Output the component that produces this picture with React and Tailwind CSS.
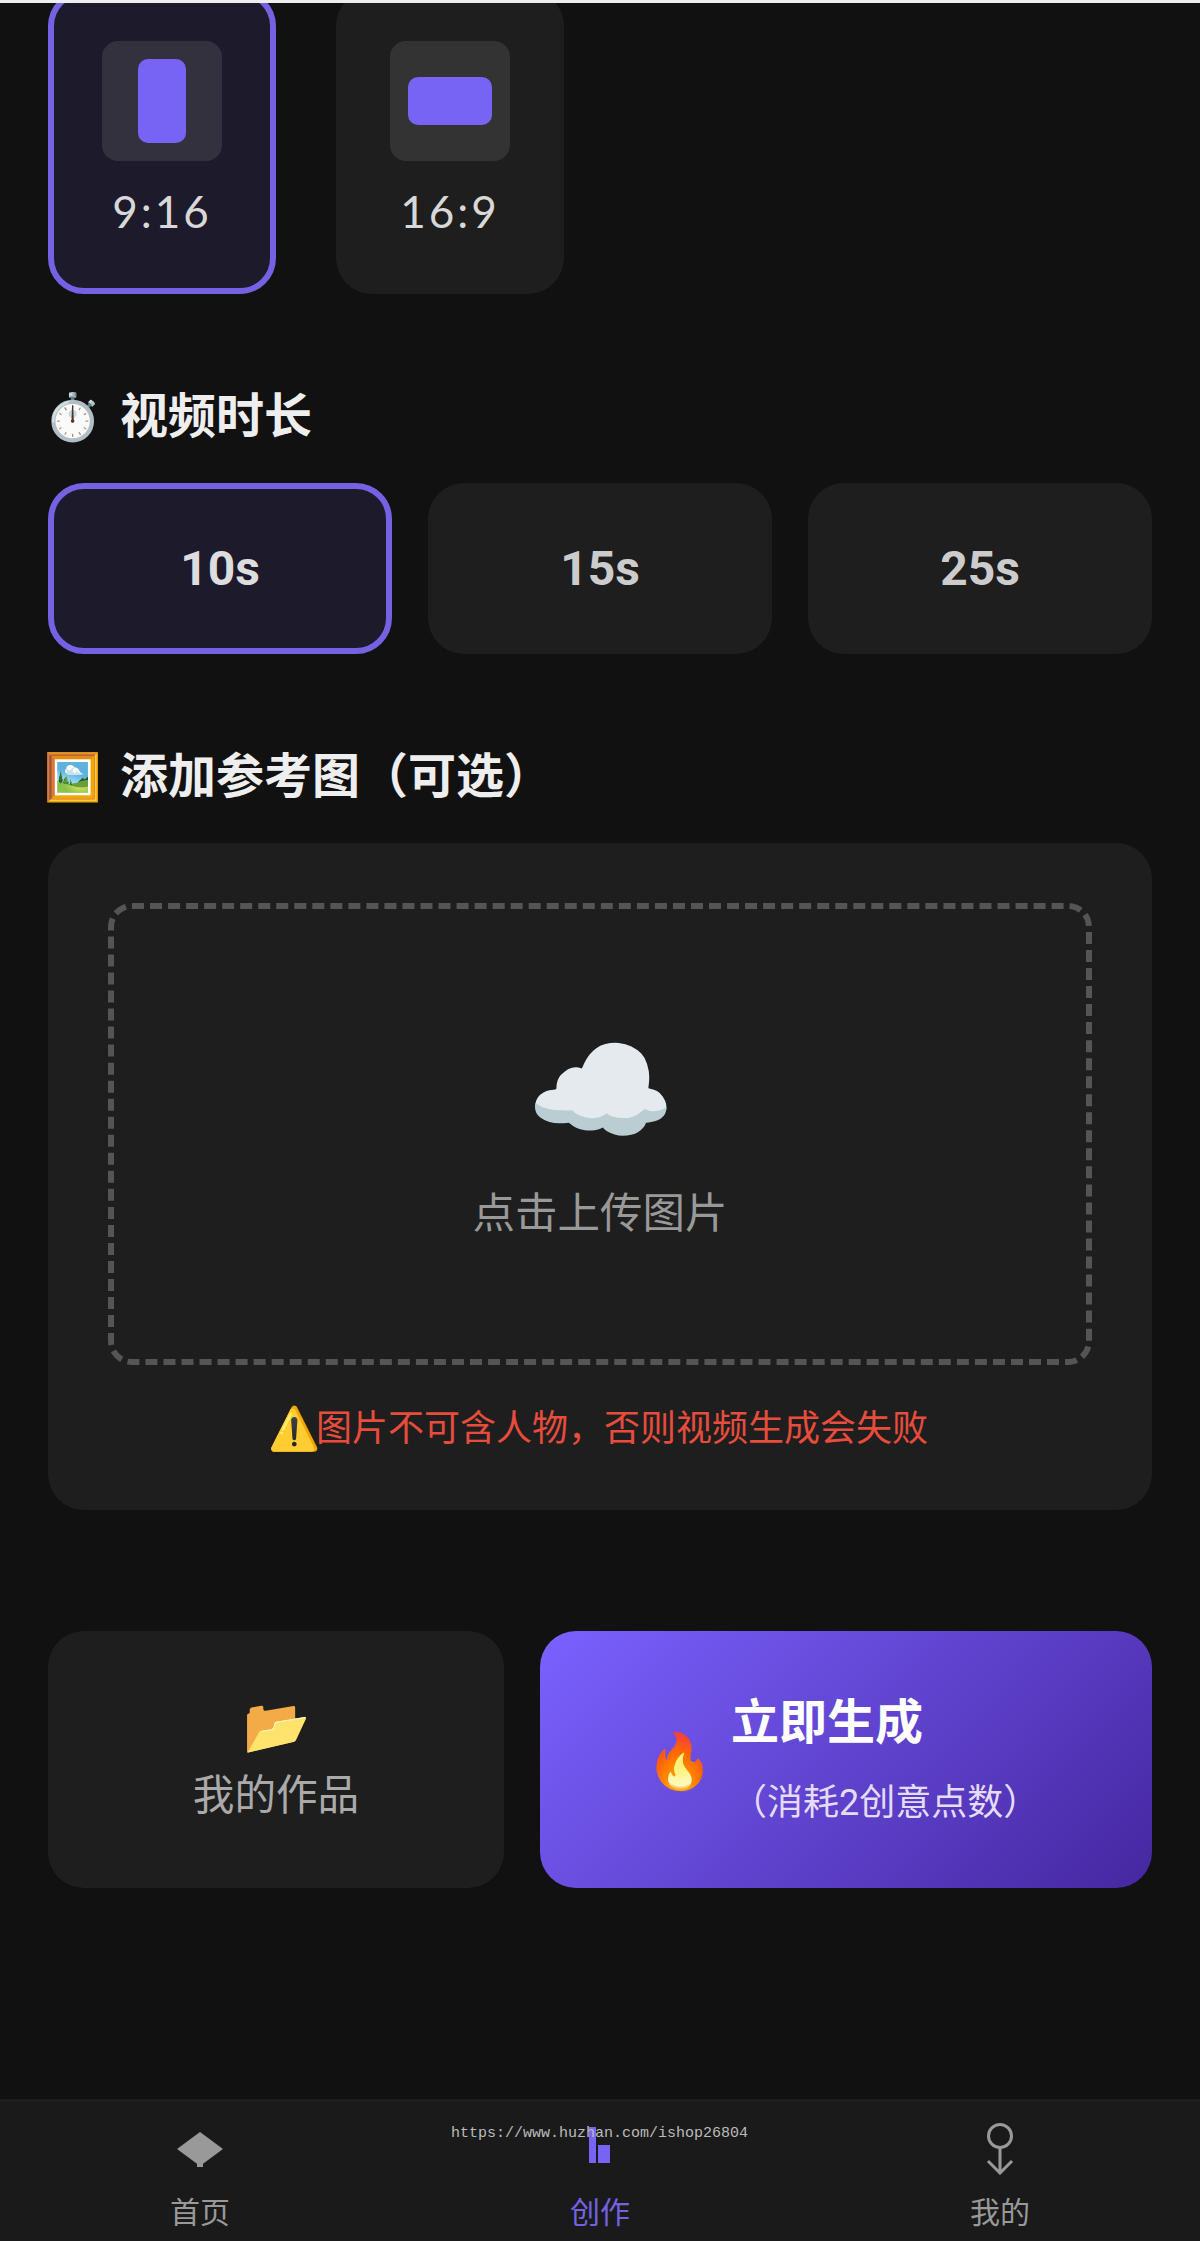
import React from 'react';

const FONT = 'font-["Roboto","Noto_Sans_CJK_SC",sans-serif]';

const RatioCard = ({ label, active, portrait }) => (
  <div
    className={`w-[228px] h-[304px] rounded-[36px] flex flex-col items-center ${
      active ? 'bg-[#1c1a2b] border-[6px] border-[#7562e2] pt-[45px]' : 'bg-[#1e1e1e] pt-[51px]'
    }`}
  >
    <div className={`w-[120px] h-[120px] rounded-[16px] flex items-center justify-center ${active ? 'bg-[#33313e]' : 'bg-[#333333]'}`}>
      <div className={`bg-[#7864f4] rounded-[10px] ${portrait ? 'w-[48px] h-[84px]' : 'w-[84px] h-[48px]'}`} />
    </div>
    <div className='mt-[20px] text-[44px] leading-[60px] tracking-[3px] text-[#d8d8d8] font-["Lato"] font-normal'>{label}</div>
  </div>
);

const DurationCard = ({ label, active }) => (
  <div
    className={`h-[171px] rounded-[36px] flex items-center justify-center text-[48px] font-bold ${
      active ? 'bg-[#1c1a2b] border-[6px] border-[#7562e2] text-[#dddddd]' : 'bg-[#1e1e1e] text-[#cccccc]'
    }`}
  >
    {label}
  </div>
);

const Title = ({ emoji, text }) => (
  <div className="flex items-center h-[70px] text-[48px] font-bold text-[#eeeeee]">
    <span className="-ml-[4px] w-[76px] text-[46px]">{emoji}</span>
    {text}
  </div>
);

const TabLabel = ({ children, active }) => (
  <div className={`text-[30px] leading-[40px] ${active ? 'text-[#7562e2]' : 'text-[#999999]'}`}>{children}</div>
);

export default function App() {
  return (
    <div className={`relative h-[2241px] overflow-hidden bg-[#111111] flex flex-col ${FONT}`}>
      <div className="h-[3px] bg-[#eeeeee] shrink-0 relative z-10" />
      <div className="flex-1 px-[48px] -mt-[13px]">
        <div className="flex gap-[60px]">
          <RatioCard label="9:16" active portrait />
          <RatioCard label="16:9" />
        </div>

        <div className="mt-[88px]">
          <Title emoji="⏱️" text="视频时长" />
        </div>
        <div className="grid grid-cols-3 gap-[36px] mt-[31px]">
          <DurationCard label="10s" active />
          <DurationCard label="15s" />
          <DurationCard label="25s" />
        </div>

        <div className="mt-[88px]">
          <Title emoji="🖼️" text="添加参考图（可选）" />
        </div>
        <div className="mt-[31px] h-[667px] rounded-[36px] bg-[#1e1e1e] px-[60px] pt-[60px]">
          <div className="h-[462px] rounded-[24px] border-[6px] border-dashed border-[#555555] flex flex-col items-center">
            <div className="mt-[112px] text-[120px] leading-[140px]">☁️</div>
            <div className="mt-[25px] text-[42.5px] leading-[56px] text-[#999999]">点击上传图片</div>
          </div>
          <div className="mt-[38px] pr-[4px] flex items-center justify-center text-[36px] leading-[52px] text-[#e74c3c]">
            <span className="text-[42px] -mr-[4px]">⚠️</span>图片不可含人物，否则视频生成会失败
          </div>
        </div>

        <div className="mt-[121px] flex gap-[36px] h-[257px]">
          <div className="w-[456px] rounded-[36px] bg-[#1e1e1e] flex flex-col items-center pt-[61px]">
            <div className="text-[54px] leading-[70px]">📂</div>
            <div className="mt-[4px] text-[41.6px] leading-[60px] text-[#aaaaaa]">我的作品</div>
          </div>
          <div className="flex-1 rounded-[36px] bg-linear-[135deg,#7b61ff,#4527a0] flex items-center pl-[106px] text-white">
            <span className="w-[85px] text-[54px] mt-[4px]">🔥</span>
            <div className="flex flex-col">
              <div className="text-[48px] leading-[64px] font-bold">立即生成</div>
              <div className="mt-[22px] text-[36px] leading-[52px] text-[#e4dcfa]">（消耗2创意点数）</div>
            </div>
          </div>
        </div>
      </div>

      <div className="h-[142px] shrink-0 bg-[#1a1a1a] border-t-2 border-[#1f1f1f] flex">
        <div className="flex-1 flex flex-col items-center">
          <svg width="48" height="40" viewBox="0 0 48 40" className="mt-[30px]">
            <path d="M24 1 L47 18 L24 35 L1 18 Z" fill="#999999" />
            <rect x="21" y="33" width="6" height="3" fill="#999999" />
          </svg>
          <div className="mt-[22px]"><TabLabel>首页</TabLabel></div>
        </div>
        <div className="flex-1 flex flex-col items-center">
          <svg width="22" height="36" viewBox="0 0 22 36" className="mt-[26px]">
            <rect x="0" y="0" width="7" height="36" fill="#7864f4" />
            <rect x="9" y="18" width="12" height="18" fill="#7864f4" />
          </svg>
          <div className="mt-[30px]"><TabLabel active>创作</TabLabel></div>
        </div>
        <div className="flex-1 flex flex-col items-center">
          <svg width="30" height="52" viewBox="0 0 30 52" className="mt-[22px]" fill="none" stroke="#999999" strokeWidth="3">
            <circle cx="15" cy="13" r="11.5" />
            <path d="M15 25 V50 M3 38 L15 50 L27 38" />
          </svg>
          <div className="mt-[18px]"><TabLabel>我的</TabLabel></div>
        </div>
      </div>

      <div className='absolute left-[451px] top-[2125px] text-[15px] leading-[18px] text-[#bbbbbb] font-["Liberation_Mono",monospace]'>
        https://www.huzhan.com/ishop26804
      </div>
    </div>
  );
}
